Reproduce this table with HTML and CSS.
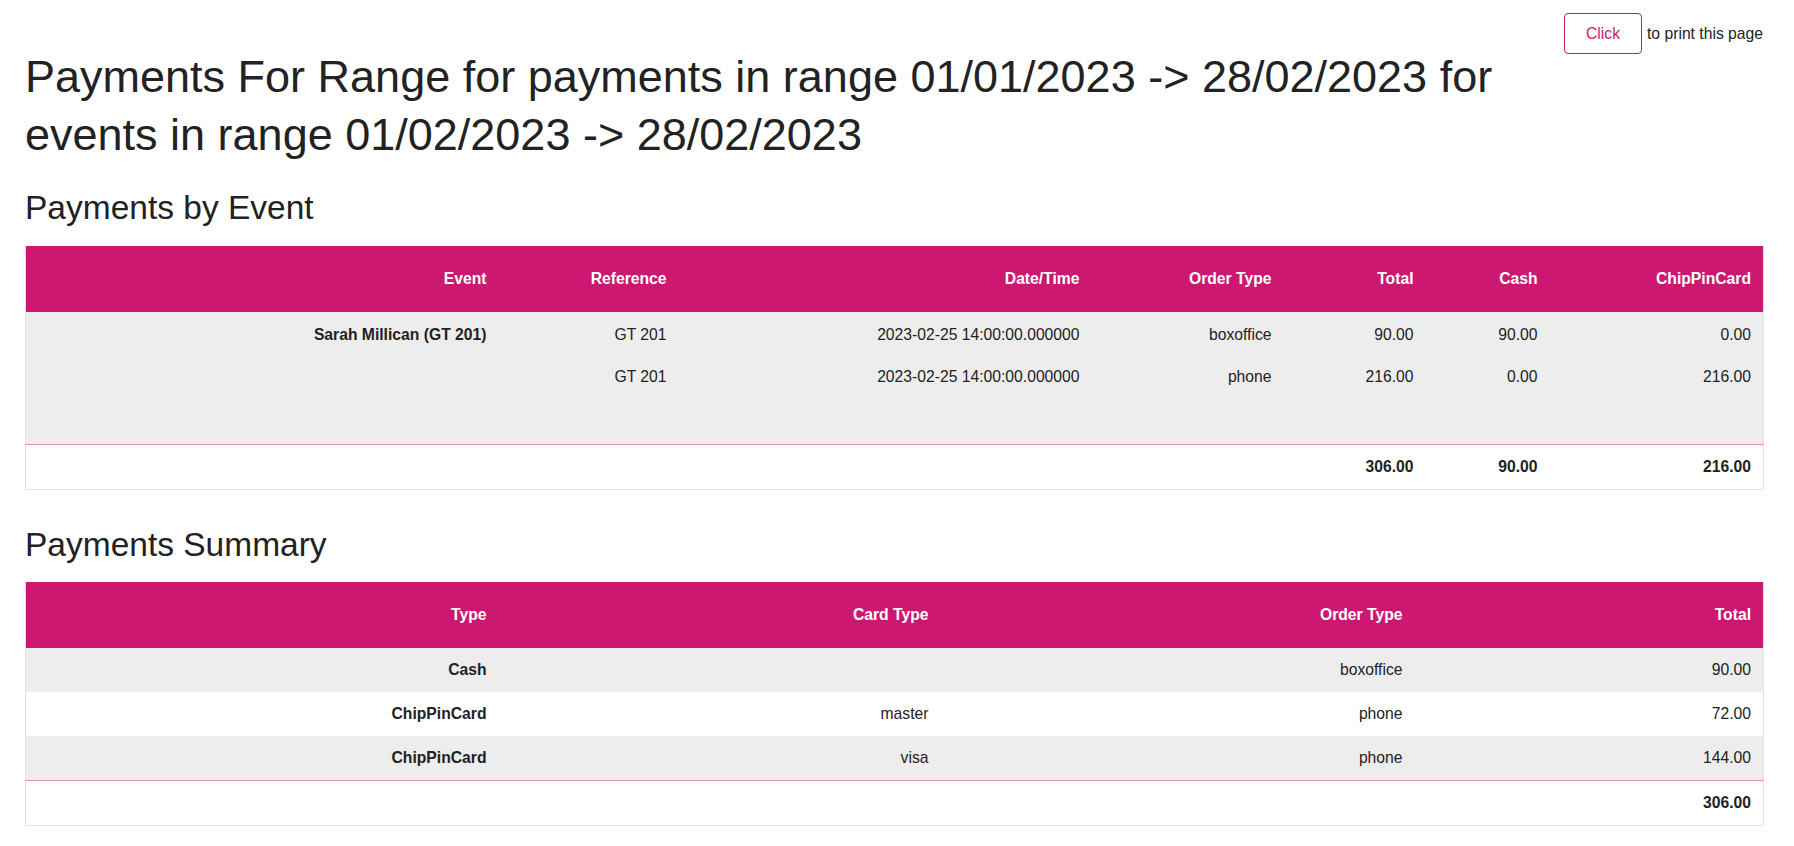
FILE: index.html
```html
<!DOCTYPE html>
<html lang="en">
<head>
<meta charset="utf-8">
<title>Payments For Range</title>
<link rel="stylesheet" href="styles.css">
</head>
<body>
<div class="page">
  <div class="print-bar"><button class="btn-print" type="button">Click</button><span class="print-note">to print this page</span></div>
  <h1 class="title">Payments For Range for payments in range 01/01/2023 -&gt; 28/02/2023 for events in range 01/02/2023 -&gt; 28/02/2023</h1>

  <h2 class="section">Payments by Event</h2>
  <table class="report report-event">
    <colgroup>
      <col class="ev-c1"><col class="ev-c2"><col class="ev-c3"><col class="ev-c4"><col class="ev-c5"><col class="ev-c6"><col class="ev-c7">
    </colgroup>
    <thead>
      <tr><th>Event</th><th>Reference</th><th>Date/Time</th><th>Order Type</th><th>Total</th><th>Cash</th><th>ChipPinCard</th></tr>
    </thead>
    <tbody class="grey">
      <tr><td class="strong">Sarah Millican (GT 201)</td><td>GT 201</td><td>2023-02-25 14:00:00.000000</td><td>boxoffice</td><td>90.00</td><td>90.00</td><td>0.00</td></tr>
      <tr><td></td><td>GT 201</td><td>2023-02-25 14:00:00.000000</td><td>phone</td><td>216.00</td><td>0.00</td><td>216.00</td></tr>
      <tr class="spacer"><td colspan="7"></td></tr>
    </tbody>
    <tfoot>
      <tr><td></td><td></td><td></td><td></td><td>306.00</td><td>90.00</td><td>216.00</td></tr>
    </tfoot>
  </table>

  <h2 class="section section-2">Payments Summary</h2>
  <table class="report report-summary">
    <colgroup>
      <col class="su-c1"><col class="su-c2"><col class="su-c3"><col class="su-c4">
    </colgroup>
    <thead>
      <tr><th>Type</th><th>Card Type</th><th>Order Type</th><th>Total</th></tr>
    </thead>
    <tbody class="striped">
      <tr><td class="strong">Cash</td><td></td><td>boxoffice</td><td>90.00</td></tr>
      <tr><td class="strong">ChipPinCard</td><td>master</td><td>phone</td><td>72.00</td></tr>
      <tr><td class="strong">ChipPinCard</td><td>visa</td><td>phone</td><td>144.00</td></tr>
    </tbody>
    <tfoot>
      <tr><td></td><td></td><td></td><td>306.00</td></tr>
    </tfoot>
  </table>
</div>
</body>
</html>
```

FILE: styles.css
```css
html, body {
  margin: 0;
  padding: 0;
  background: #ffffff;
}

body {
  font-family: "Liberation Sans", Arial, sans-serif;
  font-size: 15.7px;
  line-height: 22px;
  color: #222222;
}

.page {
  padding: 13px 31px 20px 25px;
}

.print-bar {
  float: right;
  display: flex;
  align-items: center;
  gap: 5px;
  height: 41px;
}

.btn-print {
  box-sizing: border-box;
  width: 78px;
  height: 41px;
  padding: 0;
  border: 1px solid #cc1871;
  border-radius: 4px;
  background: #ffffff;
  color: #cc1871;
  font-family: "Liberation Sans", Arial, sans-serif;
  font-size: 15.7px;
  line-height: 22px;
}

.print-note {
  color: #222222;
}

.title {
  margin: 35px 0 0 0;
  font-size: 45px;
  line-height: 58px;
  font-weight: 400;
  color: #222222;
}

.section {
  margin: 25px 0 20px 0;
  font-size: 33.5px;
  line-height: 37px;
  font-weight: 400;
  color: #222222;
}

.section-2 {
  margin-top: 36px;
  margin-bottom: 19px;
}

.report {
  width: 100%;
  border-collapse: collapse;
  table-layout: fixed;
  border: 1px solid #e2e2e2;
  border-top: 0;
}

.report th,
.report td {
  text-align: right;
  padding: 10px 12px;
  vertical-align: middle;
}

.report thead th {
  background: #cc1871;
  color: #ffffff;
  font-weight: 700;
  padding: 22px 12px;
}

.grey td {
  background: #ededed;
  padding: 12px 12px 8px 12px;
}

.grey .spacer td {
  height: 48px;
  padding: 0;
}

.striped td {
  padding: 11px 12px;
}

.striped tr:nth-child(odd) td {
  background: #ededed;
}

.report tfoot td {
  border-top: 1px solid #e28bb4;
  font-weight: 700;
  padding: 11px 12px;
  background: #ffffff;
}

.strong {
  font-weight: 700;
}

.ev-c1 { width: 473px; }
.ev-c2 { width: 180px; }
.ev-c3 { width: 413px; }
.ev-c4 { width: 192px; }
.ev-c5 { width: 142px; }
.ev-c6 { width: 124px; }
.ev-c7 { width: 214px; }

.su-c1 { width: 473px; }
.su-c2 { width: 442px; }
.su-c3 { width: 474px; }
.su-c4 { width: 349px; }
```
